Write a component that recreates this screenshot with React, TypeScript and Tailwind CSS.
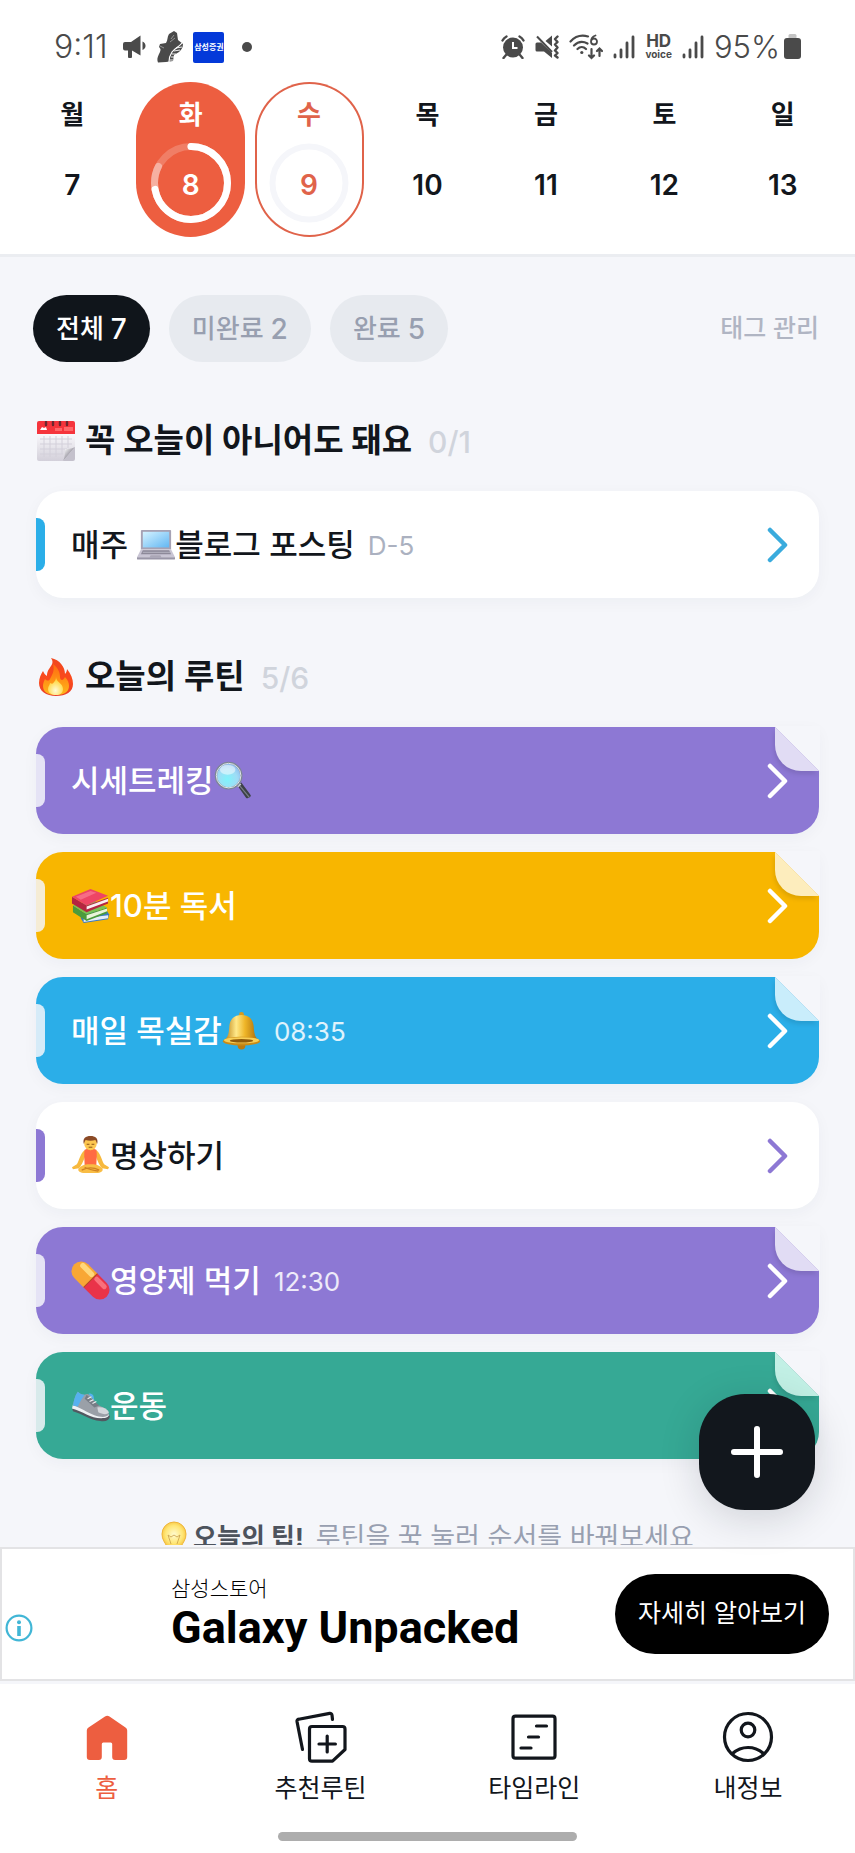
import React from 'react';

const FONT = 'font-[Inter,"Noto_Sans_CJK_KR",sans-serif]';

type IconProps = { className?: string };

/* Emoji */

const CalendarEmoji = ({ className }: IconProps) => (
  <svg viewBox="0 0 40 40" className={className} aria-hidden="true">
    <defs>
      <linearGradient id="cal-page" x1="0" y1="0" x2="0" y2="1">
        <stop offset="0" stopColor="#faf9fc" />
        <stop offset="1" stopColor="#d3d0da" />
      </linearGradient>
      <linearGradient id="cal-curl" x1="0" y1="0" x2="1" y2="1">
        <stop offset="0.1" stopColor="#fff" />
        <stop offset="0.6" stopColor="#8f8c98" />
      </linearGradient>
    </defs>
    <path d="M1 12h38v14L27 40H3a2 2 0 0 1-2-2z" fill="url(#cal-page)" />
    <path d="M3 0h34a2 2 0 0 1 2 2v11H1V2a2 2 0 0 1 2-2z" fill="#f5343c" />
    <path d="M4 9l2-3 2 1 2-1 1 3z" fill="#fff" />
    <path d="M19 7h7v3h-7zM28 6h9v4h-9z" fill="#ff6769" />
    <path d="M4 18h32M4 23h32M4 28h27M4 33h23M8 15v21M14 15v21M20 15v21M26 15v18M32 15v12" stroke="#d3d0da" strokeWidth="1" />
    <path d="M39 26L27 40h10a2 2 0 0 0 2-2z" fill="#c4c1cc" />
    <path d="M39 26c-4 2-8 2-10 2 0 4 0 8-2 12z" fill="url(#cal-curl)" />
    <path d="M10 1v3M17 1v3M24 1v3M31 1v3" stroke="#6b2830" strokeWidth="2.4" strokeLinecap="round" />
  </svg>
);

const LaptopEmoji = ({ className }: IconProps) => (
  <svg viewBox="0 0 40 40" className={className} aria-hidden="true">
    <defs>
      <linearGradient id="lap-screen" x1="0" y1="0" x2="1" y2="1">
        <stop offset="0" stopColor="#d4f2ff" />
        <stop offset="1" stopColor="#62b7f3" />
      </linearGradient>
    </defs>
    <path d="M6 5h29a1 1 0 0 1 1 1v19H5V6a1 1 0 0 1 1-1z" fill="#a6a2b4" />
    <path d="M7 7h27v16H7z" fill="url(#lap-screen)" />
    <path d="M5 25h31l4 8H1z" fill="#c9c5d4" />
    <path d="M7 26h27l2 4H5z" fill="#8d8999" />
    <path d="M7 28h28" stroke="#c3c0cd" strokeWidth=".8" />
    <path d="M15 31h10l1 2H14z" fill="#aaa6b6" />
    <path d="M1 33h39v1.500a1 1 0 0 1-1 1H2a1 1 0 0 1-1-1z" fill="#9a96a8" />
  </svg>
);

const FireEmoji = ({ className }: IconProps) => (
  <svg viewBox="0 0 40 40" className={className} aria-hidden="true">
    <defs>
      <linearGradient id="fire-out" x1="0" y1="0" x2="0" y2="1">
        <stop offset="0" stopColor="#f0481f" />
        <stop offset="0.6" stopColor="#fb4a1c" />
        <stop offset="1" stopColor="#e8402b" />
      </linearGradient>
      <linearGradient id="fire-mid" x1="0" y1="0" x2="0" y2="1">
        <stop offset="0" stopColor="#ff6a10" />
        <stop offset="1" stopColor="#ffb61a" />
      </linearGradient>
      <radialGradient id="fire-in" cx=".5" cy=".75" r=".6">
        <stop offset="0" stopColor="#fffbd6" />
        <stop offset="1" stopColor="#ffd63a" />
      </radialGradient>
    </defs>
    <path d="M15 1c9 2 14 9 14 16 1-1 2-3 2-5 4 5 6 10 6 15 0 8-7 12-17 12S3 34 3 26c0-5 2-9 4-12 1 2 2 4 4 5 0-5 2-7 4-10s2-5 0-8z" fill="url(#fire-out)" />
    <path d="M17 7c5 4 7 8 7 13 0 2 1 3 2 3s2-1 3-3c3 3 4 6 4 9 0 6-5 9-13 9S7 35 7 29c0-3 1-5 2-7 2 2 4 2 5 0 2-4 5-8 3-15z" fill="url(#fire-mid)" />
    <path d="M20 20c0 5 7 6 7 12 0 4-3 6-7 6s-8-2-8-6c0-3 2-4 2-6 2 1 3 1 4-1 1-1 2-2 2-5z" fill="url(#fire-in)" />
  </svg>
);

const MagnifierEmoji = ({ className }: IconProps) => (
  <svg viewBox="0 0 40 40" className={className} aria-hidden="true">
    <defs>
      <radialGradient id="mag-glass" cx=".45" cy=".65" r=".65">
        <stop offset="0" stopColor="#7ff3fb" />
        <stop offset="0.6" stopColor="#9fdcf5" />
        <stop offset="1" stopColor="#8db9ee" />
      </radialGradient>
    </defs>
    <path d="M24 25l4-3 9 12a2 2 0 0 1 0 3l-2 1a2 2 0 0 1-2 0z" fill="#3d4147" />
    <path d="M26 25l10 12" stroke="#7b8088" strokeWidth="1.200" />
    <path d="M22 24l3-3 3 3-3 3z" fill="#c9ced2" />
    <circle cx="15" cy="15" r="13" fill="url(#mag-glass)" stroke="#7c8795" strokeWidth="2.400" />
    <circle cx="15" cy="15" r="12.600" fill="none" stroke="#dfe5ea" strokeWidth="1" />
    <ellipse cx="14" cy="9" rx="8" ry="5" fill="#fff" opacity=".5" />
  </svg>
);

const BooksEmoji = ({ className }: IconProps) => (
  <svg viewBox="0 0 40 40" className={className} aria-hidden="true">
    <path d="M10 28l26-4 3 5-1 5-25 4-3-5z" fill="#3979c5" />
    <path d="M13 33l25-3v3l-25 4z" fill="#e4edf8" />
    <path d="M2 20l14 9 21-7v6l-21 8L2 27z" fill="#4b9b3c" />
    <path d="M16 30l21-7v3l-21 8z" fill="#e9f3db" />
    <path d="M2 20l20-6 15 8-21 7z" fill="#79c355" />
    <path d="M1 11l15 9 22-8v6l-22 9L1 18z" fill="#b52541" />
    <path d="M16 21l22-8v3l-22 8z" fill="#faeef0" />
    <path d="M1 11l19-8 18 7-22 10z" fill="#ee4565" />
    <path d="M5 11l15-6 6 2-16 7z" fill="#fb7e94" opacity=".7" />
  </svg>
);

const BellEmoji = ({ className }: IconProps) => (
  <svg viewBox="0 0 40 40" className={className} aria-hidden="true">
    <defs>
      <linearGradient id="bell-body" x1="0" y1="0" x2="1" y2="0">
        <stop offset="0" stopColor="#b97a0c" />
        <stop offset="0.35" stopColor="#ffe98a" />
        <stop offset="0.6" stopColor="#efb527" />
        <stop offset="1" stopColor="#a3650a" />
      </linearGradient>
    </defs>
    <circle cx="20" cy="3.500" r="2.500" fill="#d79a1e" />
    <circle cx="20" cy="35.500" r="4" fill="#bb7a10" />
    <path d="M20 4c8 0 12 5 12.500 12 .5 7 1 11 5.500 14H2c4.500-3 5-7 5.500-14C8 9 12 4 20 4z" fill="url(#bell-body)" />
    <ellipse cx="20" cy="31" rx="19" ry="4.500" fill="#c98b18" />
    <ellipse cx="20" cy="30" rx="18" ry="3.200" fill="#f9cf56" />
    <ellipse cx="20" cy="30.500" rx="12" ry="1.800" fill="#8f5a0b" />
  </svg>
);

const LotusEmoji = ({ className }: IconProps) => (
  <svg viewBox="0 0 40 40" className={className} aria-hidden="true">
    <path d="M15 14c-5 2-6 10-9 15l-5 3 1 2 6-1c4-4 5-9 7-13zM25 14c5 2 6 10 9 15l5 3-1 2-6-1c-4-4-5-9-7-13z" fill="#f7b93e" />
    <path d="M17 11h6v5h-6z" fill="#e9a12e" />
    <path d="M14 14l3-1c1 2 5 2 6 0l3 1c1 5 0 10 0 16H14c0-6-1-11 0-16z" fill="#ff6b42" />
    <path d="M8 33c4-4 8-4 12-4s8 0 12 4c2 3-2 5-6 5H14c-4 0-8-2-6-5z" fill="#f9bd45" />
    <path d="M11 35c6-3 12-3 18 0M14 32c4 2 8 3 14 4" fill="none" stroke="#cf8122" strokeWidth="1.200" />
    <ellipse cx="20" cy="7.500" rx="6.500" ry="7" fill="#fdc74f" />
    <path d="M13 8c-1-6 2-8 7-8s8 2 7 8c-1-1-1-3-2-4-3 1-7 1-10 0-1 1-1 3-2 4z" fill="#8b4a26" />
    <path d="M16.500 8.500h2M21.500 8.500h2M18.500 11.500h3" stroke="#8a5217" strokeWidth="1" strokeLinecap="round" />
  </svg>
);

const PillEmoji = ({ className }: IconProps) => (
  <svg viewBox="0 0 40 40" className={className} aria-hidden="true">
    <g transform="rotate(45 20 20)">
      <path d="M20 10h13.500a10 10 0 0 1 0 20H20z" fill="#e93349" />
      <path d="M20 10H6.500a10 10 0 0 0 0 20H20z" fill="#f8a735" />
      <rect x="1" y="12" width="18" height="5.500" rx="2.700" fill="#ffd77b" />
      <rect x="21" y="12" width="16" height="5" rx="2.500" fill="#f9707c" />
      <path d="M20 10v20" stroke="#b24722" strokeWidth="1" />
    </g>
  </svg>
);

const ShoeEmoji = ({ className }: IconProps) => (
  <svg viewBox="0 0 40 40" className={className} aria-hidden="true">
    <path d="M1 22l1 4c10 3 17 9 28 10 6 1 9-1 10-5l-2-2z" fill="#525961" />
    <path d="M2 19l-1 4c11 3 19 10 30 10 5 0 8-1 8-4z" fill="#eef1f4" />
    <path d="M7 6c2 2 4 3 7 3 2-1 3-1 5 0l8 10c5 3 11 4 12 10-3 4-9 3-15 1C16 27 10 22 2 20c1-5 2-10 5-14z" fill="#9aa0a8" />
    <path d="M7 6c2 2 4 3 7 3l-4 6-3 6-5-1c1-5 2-10 5-14zM18 8c2-1 4 0 5 2l1 5z" fill="#56b1f0" />
    <path d="M16 9l-2 4 10 9 5-2z" fill="#777d86" />
    <path d="M17 13l4-2M19 16l4-2M22 18l4-2" stroke="#edf0f2" strokeWidth="1.200" />
    <path d="M27 22c5-1 10 1 12 5-2 3-7 2-11 0z" fill="#d3d7dc" />
  </svg>
);

const BulbEmoji = ({ className }: IconProps) => (
  <svg viewBox="0 0 26 34" className={className} aria-hidden="true">
    <defs>
      <radialGradient id="bulb" cx=".5" cy=".5" r=".6">
        <stop offset="0" stopColor="#fffbd0" />
        <stop offset="0.6" stopColor="#ffe675" />
        <stop offset="1" stopColor="#f5b92d" />
      </radialGradient>
    </defs>
    <path d="M13 1a12 12 0 0 1 12 12c0 6-3 8-5 13H6c-2-5-5-7-5-13A12 12 0 0 1 13 1z" fill="url(#bulb)" stroke="#eeb53a" />
    <path d="M10 23l-3-9 3 2 3-2 3 2 3-2-3 9" fill="none" stroke="#c9a04a" strokeWidth=".8" />
    <path d="M8 26h10v6H8z" fill="#a9a9ad" />
  </svg>
);

/* Status bar */

const Megaphone = () => (
  <svg viewBox="0 0 24 24" className="size-6" fill="#4a4a4a" aria-hidden="true">
    <path d="M2 7h6l9.500-6.500V20.500L9 15.500V22a1 1 0 0 1-1 1H6a1 1 0 0 1-1-1v-6.500H2a2 2 0 0 1-2-2V9a2 2 0 0 1 2-2z" />
    <path d="M19.500 6.500c2 .8 3 2.300 3 4.300s-1 3.500-3 4.300z" />
  </svg>
);

const StatusShoe = () => (
  <svg viewBox="0 0 26 32" className="h-8 w-[26px]" aria-hidden="true">
    <path d="M12 3l5-3 3 2 1 7 5 4c0 4-2 6-4 8l-5 3-1 6-7 1-8 .5C0 29 0 27 2 23c2-4 2-5 0-7l1-3 6-1c2-3 1-6 3-9z" fill="#4a4a4a" />
    <path d="M25 12c-3 4-7 5-10 9-2 3-3 6-3 10" fill="none" stroke="#fff" strokeWidth="1.200" />
    <path d="M19 17l6-1M17 20l6-1M15 23h4M14 26h3M13 29h3" fill="none" stroke="#fff" strokeWidth=".9" />
    <path d="M14 8l3-4M13 11l5-4M3 15l4 2" fill="none" stroke="#a8a8a8" strokeWidth=".8" />
  </svg>
);

const Alarm = () => (
  <svg viewBox="0 0 24 24" className="size-6" fill="none" stroke="#4a4a4a" aria-hidden="true">
    <circle cx="12" cy="12.500" r="10" fill="#4a4a4a" stroke="none" />
    <path d="M1.500 5.500c1-2 2-3 4-4M22.500 5.500c-1-2-2-3-4-4M5 20l-2.500 3M19 20l2.500 3" strokeWidth="2.400" strokeLinecap="round" />
    <path d="M12 7v6h4.500" stroke="#fff" strokeWidth="2" />
  </svg>
);

const MuteVibrate = () => (
  <svg viewBox="0 0 24 24" className="size-6" fill="none" stroke="#4a4a4a" aria-hidden="true">
    <path d="M2 7.500h4L17 18v5l-8-6.500H2A1.500 1.500 0 0 1 .5 15V9A1.500 1.500 0 0 1 2 7.500zM10.500 6L17 .5v11z" fill="#4a4a4a" stroke="none" />
    <path d="M2 1.500L17 17" strokeWidth="2" />
    <path d="M22.500 1.500l-2.500 2.500 2.500 3-2.500 2.500 2.500 3-2.500 3 2.500 2.500-2.500 2.500 2.500 2" strokeWidth="2.400" strokeLinecap="round" strokeLinejoin="round" />
  </svg>
);

const Wifi = () => (
  <svg viewBox="0 0 34 26" className="h-[26px] w-[34px]" fill="none" stroke="#4a4a4a" strokeWidth="2.200" strokeLinecap="round" aria-hidden="true">
    <path d="M1.500 7.500C6.500 2 13 .8 19 2.500M5 11.500c4-4 9-4.500 13.500-2M8.500 15c2.500-2.500 6-2.500 8.500 0" />
    <circle cx="12.800" cy="18.500" r="1.600" fill="#4a4a4a" stroke="none" />
    <path d="M26.500 1.500c-3 1-4.500 3.500-4.500 6a3 3 0 1 0 3-3c-1.500 0-2.500 1-3 2.500" strokeWidth="1.800" />
    <path d="M22.500 15v9M20 21.500l2.500 2.500 2.500-2.500M30.500 22v-7.500M28 17l2.500-2.500L33 17" strokeWidth="2.200" />
  </svg>
);

const Signal = () => (
  <svg viewBox="0 0 22 24" className="h-6 w-[22px]" stroke="#4a4a4a" strokeWidth="2.800" strokeLinecap="round" aria-hidden="true">
    <path d="M2 20v2M8 15v7M14 8v14M20 2v20" />
  </svg>
);

const StatusBar = () => (
  <div className="flex items-center justify-between pt-[31px] pr-[54px] pl-[54px] text-[#4a4a4a]">
    <div className="flex h-8 items-center gap-2.5">
      <span className="mr-1.5 text-[32px] leading-8 font-light">9:11</span>
      <Megaphone />
      <StatusShoe />
      <span className="flex size-[31px] items-center justify-center rounded-xs bg-[#0439d9] text-[8px] font-bold text-white">삼성증권</span>
      <span className="ml-2 size-[10px] rounded-full bg-[#4a4a4a]" />
    </div>
    <div className="flex h-8 items-center gap-2.5">
      <Alarm />
      <MuteVibrate />
      <Wifi />
      <Signal />
      <span className="flex flex-col items-center font-bold">
        <span className="text-[17px] leading-[14px]">HD</span>
        <span className="text-[10px] leading-3">voice</span>
      </span>
      <Signal />
      <span className="flex items-center gap-1">
        <span className="text-[31px] leading-8 font-light">95%</span>
        <svg viewBox="0 0 17 26" className="h-[26px] w-[17px]" aria-hidden="true">
          <rect x="4.500" y="0" width="8" height="6" rx="1.500" fill="#c4c4c4" />
          <rect x="0" y="4" width="17" height="21" rx="3" fill="#4a4a4a" />
        </svg>
      </span>
    </div>
  </div>
);

/* Week strip */

const DAYS = [
  { label: '월', date: 7 },
  { label: '화', date: 8, state: 'selected' },
  { label: '수', date: 9, state: 'today' },
  { label: '목', date: 10 },
  { label: '금', date: 11 },
  { label: '토', date: 12 },
  { label: '일', date: 13 },
];

const DAY_STYLES: Record<string, string> = {
  selected: 'bg-[#ed5e40] text-white',
  today: 'text-[#e0634a] ring-2 ring-inset ring-[#e0634a]',
  plain: 'text-[#12161c]',
};

const WeekStrip = () => (
  <div className="grid grid-cols-7 px-[13px] pt-[19px] pb-[17px]">
    {DAYS.map((day) => (
      <button
        key={day.date}
        className={`mx-auto flex w-[109px] flex-col items-center rounded-full pt-[15px] pb-3.5 font-semibold ${DAY_STYLES[day.state ?? 'plain']}`}
      >
        <span className="text-[26px] leading-9">{day.label}</span>
        <span className="relative mt-2.5 flex size-20 items-center justify-center text-[28px]">
          {day.state && (
            <svg viewBox="0 0 80 80" className="absolute inset-0 -rotate-90" fill="none" aria-hidden="true">
              {day.state === 'selected' ? (
                <g stroke="#fff" strokeWidth="7" strokeLinecap="round">
                  <circle cx="40" cy="40" r="36.500" strokeOpacity=".2" />
                  <circle cx="40" cy="40" r="36.500" stroke="#f6b0a1" pathLength="360" strokeDasharray="297 360" />
                  <circle cx="40" cy="40" r="36.500" pathLength="360" strokeDasharray="260 360" />
                </g>
              ) : (
                <circle cx="40" cy="40" r="36.500" stroke="#f5f6fa" strokeWidth="6" />
              )}
            </svg>
          )}
          <span className="relative pt-1">{day.date}</span>
        </span>
      </button>
    ))}
  </div>
);

/* Routine list */

const FILTERS = [
  { label: '전체', count: 7, active: true },
  { label: '미완료', count: 2 },
  { label: '완료', count: 5 },
];

const COLORS = {
  purple: { bg: 'bg-[#8d78d4]', text: 'text-[#8d78d4]', fold: 'text-[#e1dcf4]' },
  yellow: { bg: 'bg-[#f8b600]', text: 'text-[#f8b600]', fold: 'text-[#fdedbd]' },
  blue: { bg: 'bg-[#2baee8]', text: 'text-[#3aabdd]', fold: 'text-[#c9edfb]' },
  green: { bg: 'bg-[#36a995]', text: 'text-[#36a995]', fold: 'text-[#c2f0e5]' },
};

type Routine = {
  id: string;
  title: React.ReactNode;
  note?: string;
  color: keyof typeof COLORS;
  done?: boolean;
};

const EMOJI = 'inline-block size-[39px] align-[-8px]';

const FLEXIBLE: Routine[] = [
  { id: 'blog', title: <>매주 <LaptopEmoji className={EMOJI} />블로그 포스팅</>, note: 'D-5', color: 'blue' },
];

const TODAY: Routine[] = [
  { id: 'price', title: <>시세트레킹<MagnifierEmoji className={EMOJI} /></>, color: 'purple', done: true },
  { id: 'read', title: <><BooksEmoji className={EMOJI} />10분 독서</>, color: 'yellow', done: true },
  { id: 'goal', title: <>매일 목실감<BellEmoji className={EMOJI} /></>, note: '08:35', color: 'blue', done: true },
  { id: 'meditate', title: <><LotusEmoji className={EMOJI} />명상하기</>, color: 'purple' },
  { id: 'vitamin', title: <><PillEmoji className={EMOJI} />영양제 먹기</>, note: '12:30', color: 'purple', done: true },
  { id: 'workout', title: <><ShoeEmoji className={EMOJI} />운동</>, color: 'green', done: true },
];

const RoutineCard = ({ routine }: { routine: Routine }) => {
  const color = COLORS[routine.color];
  return (
    <a
      href="#"
      className={`relative flex h-[107px] items-center justify-between rounded-[27px] pr-[30px] pl-[35px] shadow-[0_4px_16px_rgba(30,40,70,0.04)] ${
        routine.done ? `rounded-tr-none text-white ${color.bg}` : 'bg-white text-[#12161c]'
      }`}
    >
      <span className={`absolute top-[27px] left-0 h-[53px] w-[9px] rounded-r-lg ${routine.done ? 'bg-[#f5f6fa]/85' : color.bg}`} />
      {routine.done && (
        <svg viewBox="0 0 44 44" className={`absolute top-0 right-0 size-11 overflow-visible ${color.fold}`} aria-hidden="true">
          <path d="M0 0v18a26 26 0 0 0 26 26h18z" fill="currentColor" className="drop-shadow-[-1px_3px_2px_rgba(0,0,0,0.1)]" />
          <path d="M0-1h45v45h-1L0 0z" fill="#f5f6fa" />
        </svg>
      )}
      <span className="flex items-center gap-[13px]">
        <span className="text-[31px] leading-10 font-medium">{routine.title}</span>
        {routine.note && (
          <span className={`pt-0.5 text-[26px] ${routine.done ? 'text-white/85' : 'text-[#abb1c0]'}`}>{routine.note}</span>
        )}
      </span>
      <svg viewBox="0 0 22 36" className={`relative h-9 w-[22px] ${routine.done ? 'text-white' : color.text}`} aria-hidden="true">
        <path d="M3 3l15 15L3 33" fill="none" stroke="currentColor" strokeWidth="4.500" strokeLinecap="round" strokeLinejoin="round" />
      </svg>
    </a>
  );
};

const RoutineSection = ({ icon, title, progress, routines }: { icon: React.ReactNode; title: string; progress: string; routines: Routine[] }) => (
  <section className="mt-[55px] px-9">
    <h2 className="mb-[26px] flex h-12 items-center text-[33px] font-bold text-[#12161c]">
      {icon}
      <span className="ml-[9px]">{title}</span>
      <span className="ml-4 pt-0.5 text-[30px] font-medium text-[#d0d4dc]">{progress}</span>
    </h2>
    <div className="flex flex-col gap-[18px]">
      {routines.map((routine) => (
        <RoutineCard key={routine.id} routine={routine} />
      ))}
    </div>
  </section>
);

/* Bottom navigation */

const HomeIcon = () => (
  <svg viewBox="0 0 52 52" className="size-[52px]" fill="currentColor" aria-hidden="true">
    <path d="M24 5.500a4 4 0 0 1 4.500 0L44.500 16.500a3.500 3.500 0 0 1 1.700 3V46a3 3 0 0 1-3 3h-9a3 3 0 0 1-3-3V33a1.500 1.500 0 0 0-1.500-1.500h-7.400A1.500 1.500 0 0 0 20.800 33v13a3 3 0 0 1-3 3h-9a3 3 0 0 1-3-3V19.500a3.500 3.500 0 0 1 1.700-3z" />
  </svg>
);

const RecommendIcon = () => (
  <svg viewBox="0 0 52 52" className="size-[52px]" fill="none" stroke="currentColor" strokeWidth="3.200" strokeLinecap="round" strokeLinejoin="round" aria-hidden="true">
    <path d="M7.500 38.500L2 10.500a2 2 0 0 1 1.700-2.300l31-5.800a2 2 0 0 1 2.300 1.700l.5 4.400" />
    <path d="M17 15.500h30.500a2.500 2.500 0 0 1 2.500 2.500v20.500L37.500 50.200H17a2.500 2.500 0 0 1-2.500-2.500V18a2.500 2.500 0 0 1 2.500-2.500zM32.200 25v16M24 33h16.400" />
  </svg>
);

const TimelineIcon = () => (
  <svg viewBox="0 0 52 52" className="size-[52px]" fill="none" stroke="currentColor" strokeWidth="3.200" strokeLinecap="round" strokeLinejoin="round" aria-hidden="true">
    <rect x="5" y="5.200" width="42" height="42" rx="2.500" />
    <path d="M28.500 15h10M20.500 26h10M13 37h10" />
  </svg>
);

const ProfileIcon = () => (
  <svg viewBox="0 0 52 52" className="size-[52px]" fill="none" stroke="currentColor" strokeWidth="3.200" strokeLinecap="round" aria-hidden="true">
    <circle cx="26" cy="26" r="23.500" />
    <circle cx="26" cy="19" r="6.800" />
    <path d="M10.500 42.500c9-8 22-8 31 0" />
  </svg>
);

const NAV_ITEMS = [
  { label: '홈', icon: HomeIcon, active: true },
  { label: '추천루틴', icon: RecommendIcon },
  { label: '타임라인', icon: TimelineIcon },
  { label: '내정보', icon: ProfileIcon },
];

const App = () => {
  return (
    <div className={`flex h-screen flex-col overflow-hidden bg-[#f5f6fa] ${FONT}`}>
      <header className="border-b-3 border-[#ebedf1] bg-white">
        <StatusBar />
        <WeekStrip />
      </header>

      <div className="relative min-h-0 flex-1">
        <main className="h-full overflow-y-auto pt-[38px] [scrollbar-width:none]">
          <div className="flex items-center justify-between pr-9 pl-[33px]">
            <div className="flex gap-[19px]">
              {FILTERS.map((filter) => (
                <button
                  key={filter.label}
                  className={`flex h-[67px] items-center gap-[7px] rounded-full px-[23px] text-[26px] font-medium ${
                    filter.active ? 'bg-[#10151b] text-white' : 'bg-[#e7eaef] text-[#989fb0]'
                  }`}
                >
                  {filter.label}
                  <span className="text-[28px]">{filter.count}</span>
                </button>
              ))}
            </div>
            <a href="#" className="text-[25px] font-medium text-[#b0b5c3]">태그 관리</a>
          </div>

          <RoutineSection icon={<CalendarEmoji className="size-10" />} title="꼭 오늘이 아니어도 돼요" progress="0/1" routines={FLEXIBLE} />
          <RoutineSection icon={<FireEmoji className="size-10" />} title="오늘의 루틴" progress="5/6" routines={TODAY} />

          <p className="mt-[61px] flex items-center justify-center pb-16 text-[27px] leading-9 text-[#989fb0]">
            <BulbEmoji className="h-[34px] w-[26px]" />
            <span className="mr-3 ml-1.5 text-[26px] font-bold text-[#4d535d]">오늘의 팁!</span>
            루틴을 꾹 눌러 순서를 바꿔보세요
          </p>
        </main>

        <button
          aria-label="루틴 추가"
          className="absolute right-10 bottom-[35px] flex size-[116px] items-center justify-center rounded-[46px] bg-[#12171d] shadow-[0_8px_40px_rgba(20,25,35,0.16)]"
        >
          <svg viewBox="0 0 54 54" className="size-[54px]" stroke="#fff" strokeWidth="6" strokeLinecap="round" aria-hidden="true">
            <path d="M27 4v46M4 27h46" />
          </svg>
        </button>
      </div>

      <aside className="mt-0.5 mb-[3px] flex h-[134px] items-center justify-between border-2 border-[#e3e3e5] bg-white pr-6 pl-[3px]">
        <div className="flex items-center">
          <svg viewBox="0 0 28 28" className="mt-7 size-7" fill="none" stroke="#41b6d6" strokeWidth="2.200" aria-hidden="true">
            <circle cx="14" cy="14" r="12.400" />
            <circle cx="14" cy="8.300" r="2" fill="#41b6d6" stroke="none" />
            <path d="M14 12v10" strokeWidth="3.600" />
          </svg>
          <div className="ml-[138px] text-black">
            <p className="text-[21px] leading-7 font-light">삼성스토어</p>
            <p className="font-[Roboto,sans-serif] text-[45px] leading-[50px] font-bold">Galaxy Unpacked</p>
          </div>
        </div>
        <button className="h-20 rounded-full bg-black px-[23px] text-[25px] font-normal text-white">자세히 알아보기</button>
      </aside>

      <footer className="bg-white pt-[27px] pb-3">
        <nav className="grid grid-cols-4">
          {NAV_ITEMS.map((item) => (
            <a
              key={item.label}
              href="#"
              className={`flex flex-col items-center text-[25px] leading-8 ${item.active ? 'text-[#ed5e40]' : 'text-[#12161c]'}`}
            >
              <item.icon />
              <span className="mt-[9px]">{item.label}</span>
            </a>
          ))}
        </nav>
        <div className="mx-auto mt-7 h-[9px] w-[35%] rounded-full bg-[#adadad]" />
      </footer>
    </div>
  );
};

export default App;
